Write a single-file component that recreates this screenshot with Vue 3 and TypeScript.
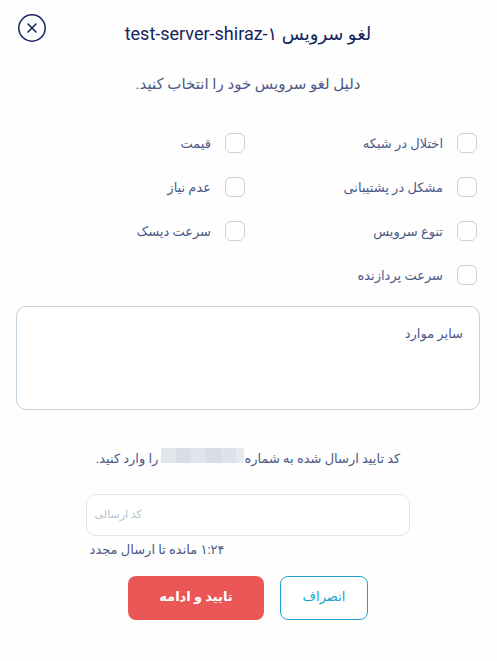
<script setup lang="ts">
import { ref } from 'vue'

interface Reason {
  id: string
  label: string
}

const reasons: Reason[] = [
  { id: 'network', label: 'اختلال در شبکه' },
  { id: 'price', label: 'قیمت' },
  { id: 'support', label: 'مشکل در پشتیبانی' },
  { id: 'unneeded', label: 'عدم نیاز' },
  { id: 'variety', label: 'تنوع سرویس' },
  { id: 'disk', label: 'سرعت دیسک' },
  { id: 'cpu', label: 'سرعت پردازنده' },
]

const selected = ref<string[]>([])
const otherReason = ref('')
const code = ref('')
</script>

<template>
  <form class="dialog" dir="rtl" @submit.prevent>
    <header class="header">
      <h1 class="title">لغو سرویس test-server-shiraz-۱</h1>
      <button type="button" class="close" aria-label="بستن">
        <svg width="28" height="28" viewBox="0 0 28 28" fill="none" stroke="currentColor">
          <circle cx="14" cy="14" r="13.2" stroke-width="1.5" />
          <path d="M10 10l8 8M18 10l-8 8" stroke-width="1.6" stroke-linecap="round" />
        </svg>
      </button>
    </header>

    <p class="question">دلیل لغو سرویس خود را انتخاب کنید.</p>

    <div class="reasons">
      <label v-for="reason in reasons" :key="reason.id" class="reason">
        <input v-model="selected" type="checkbox" class="box" :value="reason.id" />
        <span class="reason-text">{{ reason.label }}</span>
      </label>
    </div>

    <textarea v-model="otherReason" class="other" placeholder="سایر موارد" aria-label="سایر موارد"></textarea>

    <section class="verify">
      <label class="sent" for="code">
        <span>کد تایید ارسال شده به شماره</span>
        <span class="mask"></span>
        <span class="after">را وارد کنید.</span>
      </label>
      <input id="code" v-model="code" class="code" type="text" placeholder="کد ارسالی" />
      <p class="timer">۱:۲۴ مانده تا ارسال مجدد</p>
    </section>

    <div class="actions">
      <button type="button" class="btn cancel">انصراف</button>
      <button type="submit" class="btn confirm">تایید و ادامه</button>
    </div>
  </form>
</template>

<style>
body {
  background: #fefefe;
}
</style>

<style scoped>
.dialog {
  display: flex;
  flex-direction: column;
  padding: 14px 17px 40px 16px;
  color: #4c5888;
  font-family: Roboto, "DejaVu Sans", sans-serif;
  font-size: 13px;
  line-height: 20px;
}

.dialog * {
  box-sizing: border-box;
}

.header {
  display: grid;
  grid-template-columns: 30px 1fr 30px;
}

.title {
  grid-column: 2;
  margin: 8px 0 0;
  color: #14255c;
  font-size: 18px;
  font-weight: 400;
  line-height: 24px;
  text-align: center;
}

.close {
  width: 28px;
  height: 28px;
  margin-right: auto;
  margin-left: 2px;
  padding: 0;
  border: 0;
  background: none;
  color: #14255c;
  cursor: pointer;
}

.close svg {
  display: block;
}

.question {
  margin: 26px 0 0;
  font-size: 15px;
  line-height: 24px;
  text-align: center;
}

.reasons {
  display: grid;
  grid-template-columns: 1fr 1fr;
  row-gap: 24px;
  margin-top: 37px;
}

.reason {
  display: flex;
  align-items: center;
  gap: 14px;
  height: 20px;
  padding-right: 3px;
}

.reason-text {
  padding-top: 2px;
}

.box {
  appearance: none;
  flex: none;
  width: 20px;
  height: 20px;
  margin: 0;
  border: 1px solid #cbccd9;
  border-radius: 6px;
  background: #fff;
}

.box:checked {
  border-color: #1c9fcb;
  background: #1c9fcb;
}

.other {
  display: block;
  width: 100%;
  height: 104px;
  margin: 21px 0 0;
  padding: 17px 16px;
  border: 1px solid #c3d0dd;
  border-radius: 10px;
  background: #fff;
  color: inherit;
  font: inherit;
  resize: none;
}

.other::placeholder {
  color: #4c5888;
  opacity: 1;
}

.verify {
  display: flex;
  flex-direction: column;
  width: 70%;
  margin: 38px auto 0;
}

.sent {
  display: flex;
  align-items: center;
  justify-content: center;
  white-space: nowrap;
}

.mask {
  width: 83px;
  height: 15px;
  margin-bottom: 7px;
  background: linear-gradient(
    to right,
    #e2e5eb 15px,
    #d9dde7 15px 30px,
    #e1e4ec 30px 45px,
    #d8dce6 45px 60px,
    #dfe2eb 60px 75px,
    #e8eaf1 75px
  );
}

.after {
  margin-right: 3px;
}

.code {
  width: 100%;
  height: 42px;
  margin-top: 24px;
  padding: 0 8px 2px;
  border: 1px solid #e3e5ea;
  border-radius: 10px;
  background: #fff;
  color: inherit;
  font: inherit;
  font-size: 11px;
  text-align: left;
}

.code::placeholder {
  color: #b5bfcd;
  opacity: 1;
}

.timer {
  margin: 4px 0 0;
  padding-left: 4px;
  text-align: left;
}

.actions {
  display: flex;
  justify-content: center;
  gap: 16px;
  margin-top: 16px;
}

.btn {
  height: 44px;
  padding: 0 0 2px;
  border: 1px solid transparent;
  border-radius: 8px;
  font: inherit;
  cursor: pointer;
}

.cancel {
  width: 88px;
  border-color: #1c9fcb;
  background: #fff;
  color: #1c9fcb;
}

.confirm {
  width: 136px;
  background: #eb5757;
  color: #fff;
  font-weight: 700;
}
</style>
